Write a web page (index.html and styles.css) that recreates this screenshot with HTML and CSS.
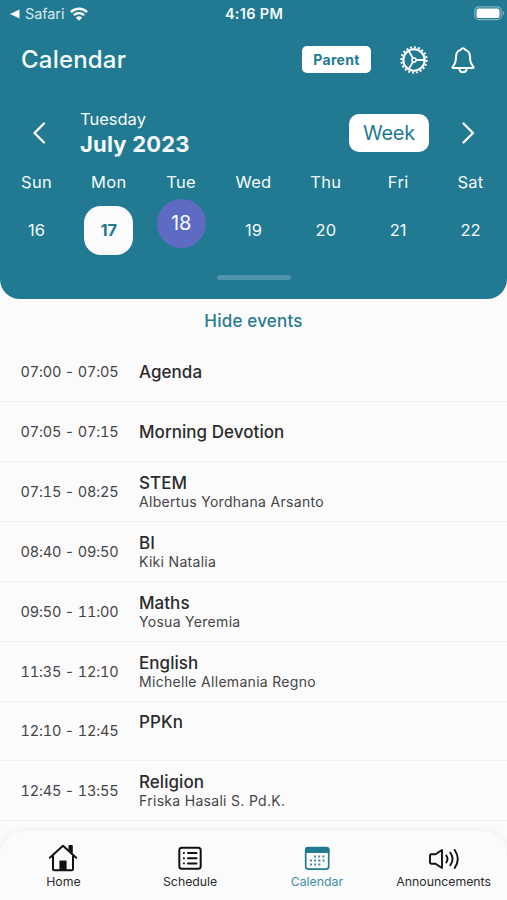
FILE: index.html
```html
<!DOCTYPE html>
<html lang="en">
<head>
<meta charset="utf-8">
<title>Calendar</title>
<link rel="stylesheet" href="styles.css">
</head>
<body>
<div class="app">
  <header class="panel">
    <div class="status">
      <div class="status-left">
        <svg width="10" height="10" viewBox="0 0 10 10"><path d="M0 5 9.5.5v9z" fill="#fff"/></svg>
        <span class="back">Safari</span>
        <svg class="wifi" width="18" height="14" viewBox="0 0 18 14" fill="none" stroke="#fff" stroke-width="2.4"><path d="M.9 5.1a11.6 11.6 0 0 1 16.2 0M3.9 8.2a7.4 7.4 0 0 1 10.2 0"/><path d="M9 13.8 5.900 10.700a4.500 4.500 0 0 1 6.200 0z" fill="#fff" stroke="none"/></svg>
      </div>
      <span class="clock">4:16 PM</span>
      <svg class="battery" width="31" height="15" viewBox="0 0 31 15"><rect x=".8" y=".8" width="26.4" height="12.8" rx="4" fill="none" stroke="#7fb1c0" stroke-width="1.2"/><rect x="2.5" y="2.5" width="23" height="9.4" rx="2.2" fill="#fff"/><path d="M28.700 5v4.400q1.500-.7 1.500-2.200T28.700 5z" fill="#7fb1c0"/></svg>
    </div>
    <div class="titlebar">
      <h1>Calendar</h1>
      <span class="role">Parent</span>
      <svg class="gear" width="28" height="28" viewBox="-14 -14 28 28" fill="none" stroke="#fff"><circle r="10.7" stroke-width="2.1"/><circle r="12.7" stroke-width="2" pathLength="40" stroke-dasharray="1 1"/><circle r="2.1" stroke-width="1.5"/><path d="M2.200 0H10.500M-1.100-1.900-5.400-9.400M-1.100 1.900-5.400 9.400" stroke-width="1.9"/></svg>
      <svg class="bell" width="26" height="28" viewBox="0 0 26 28" fill="none" stroke="#fff" stroke-width="2" stroke-linejoin="round" stroke-linecap="round"><path d="M13 2.200c-1.300 0-2 .7-2.200 1.700C7.300 4.900 6 7.600 6 11c0 5.600-1.200 7.400-3.200 9.600-.7.800-.5 1.500.5 1.500h19.400c1 0 1.200-.7.500-1.500C21.200 18.400 20 16.600 20 11c0-3.400-1.300-6.100-4.800-7.100C15 2.900 14.300 2.200 13 2.200z"/><path d="M9.300 22.500c.3 2.200 1.600 3.700 3.700 3.700s3.400-1.500 3.700-3.700"/></svg>
    </div>
    <div class="monthbar">
      <svg class="prev" width="14" height="24" viewBox="0 0 14 24"><path d="M12 2.500 2.500 12l9.500 9.500"/></svg>
      <div class="month"><span class="weekday">Tuesday</span><strong>July 2023</strong></div>
      <span class="view">Week</span>
      <svg class="next" width="14" height="24" viewBox="0 0 14 24"><path d="m2.500 2.500 9.500 9.500-9.500 9.500"/></svg>
    </div>
    <div class="week names"><span>Sun</span><span>Mon</span><span>Tue</span><span>Wed</span><span>Thu</span><span>Fri</span><span>Sat</span></div>
    <div class="week days"><span>16</span><span class="selected">17</span><span class="today">18</span><span>19</span><span>20</span><span>21</span><span>22</span></div>
    <div class="handle"></div>
  </header>
  <main>
    <div class="toggle">Hide events</div>
    <ul class="events">
      <li><time>07:00 - 07:05</time><div class="event"><b>Agenda</b></div></li>
      <li><time>07:05 - 07:15</time><div class="event"><b>Morning Devotion</b></div></li>
      <li><time>07:15 - 08:25</time><div class="event"><b>STEM</b><small>Albertus Yordhana Arsanto</small></div></li>
      <li><time>08:40 - 09:50</time><div class="event"><b>BI</b><small>Kiki Natalia</small></div></li>
      <li><time>09:50 - 11:00</time><div class="event"><b>Maths</b><small>Yosua Yeremia</small></div></li>
      <li><time>11:35 - 12:10</time><div class="event"><b>English</b><small>Michelle Allemania Regno</small></div></li>
      <li><time>12:10 - 12:45</time><div class="event"><b>PPKn</b><small></small></div></li>
      <li><time>12:45 - 13:55</time><div class="event"><b>Religion</b><small>Friska Hasali S. Pd.K.</small></div></li>
    </ul>
  </main>
  <nav>
    <a><svg width="30" height="28" viewBox="0 0 30 28" fill="none" stroke="#111" stroke-width="2" stroke-linecap="round" stroke-linejoin="round"><path d="M1.800 13.700 15 1.800l13.200 11.900M5 12v12.700q0 1.500 1.500 1.500h17q1.500 0 1.500-1.500V12"/><path d="M21.500 5.500V2h2.300v6.200z" fill="#111"/><path d="M12 17.200h6v8.800h-6z" fill="#111" stroke-width="1.200"/></svg><span>Home</span></a>
    <a><svg width="30" height="28" viewBox="0 0 30 28" fill="none" stroke="#111" stroke-width="2" stroke-linecap="round"><rect x="4.300" y="3.700" width="21.400" height="21" rx="2.500"/><path d="M13 9h8.500M13 14.200h8.500M13 19.400h8.500"/><path d="M8.800 9h.2M8.800 14.200h.2M8.800 19.400h.2" stroke-width="1.900"/></svg><span>Schedule</span></a>
    <a class="active"><svg width="30" height="28" viewBox="0 0 30 28"><rect x="3.700" y="3.700" width="23" height="21.400" rx="2.500" fill="none" stroke="#227a92" stroke-width="1.700"/><path d="M3 9V5.500Q3 3 5.500 3h19Q27.500 3 27.500 5.500V9z" fill="#227a92"/><path d="M12 12.500h11M8 16.500h15M8 20.500h11" stroke="#227a92" stroke-width="2" stroke-dasharray="2 2.150" opacity=".85"/></svg><span>Calendar</span></a>
    <a><svg width="32" height="28" viewBox="0 0 32 28" fill="none" stroke="#111" stroke-width="1.900" stroke-linecap="round" stroke-linejoin="round"><path d="M2 11.500q0-1.200 1.200-1.200H7.500L14 6v18L7.500 19.700H3.200Q2 19.700 2 18.500z"/><path d="M18.300 11.500q2.400 3.500 0 7M22.300 8.800q4.500 6.200 0 12.400M26.700 6q6.200 9 0 18"/></svg><span>Announcements</span></a>
  </nav>
</div>
</body>
</html>
```

FILE: styles.css
```css
* { box-sizing: border-box; }
body { margin: 0; background: #fbfbfb; font-family: Inter, "Liberation Sans", sans-serif; color: #2b2b2d; }
.app { width: 507px; height: 900px; display: flex; flex-direction: column; overflow: hidden; }
svg { display: block; flex: none; }
.panel { height: 299px; flex: none; background: #227a92; color: #f5fbfc; border-radius: 0 0 20px 20px; }

.status { height: 27px; display: grid; grid-template-columns: 1fr auto 1fr; align-items: center; padding: 0 8px 0 10px; }
.status-left { display: flex; align-items: center; }
.back { font-size: 14.500px; line-height: 18px; margin-left: 5px; letter-spacing: -.1px; color: #d5eaf0; }
.wifi { margin-left: 6px; }
.clock { font-size: 14.500px; font-weight: 600; letter-spacing: .3px; margin-left: -1px; }
.battery { justify-self: end; margin-right: -6px; }

.titlebar { height: 65px; display: flex; align-items: center; padding: 0 31px 0 21px; }
h1 { margin: 0 auto 0 0; font-size: 24px; font-weight: 500; letter-spacing: .2px; line-height: 30px; }
.role { width: 69px; height: 27px; line-height: 27px; margin-right: 1px; border-radius: 5px; background: #fff; color: #227a92; text-align: center; font-size: 14px; font-weight: 700; letter-spacing: .3px; }
.gear { margin-left: 28px; }
.bell { margin-left: 22px; }

.monthbar { height: 75px; display: flex; align-items: center; padding: 6px 32px 0; }
.prev, .next { fill: none; stroke: #fff; stroke-width: 2.300; stroke-linecap: round; stroke-linejoin: round; }
.month { margin: -1px auto 0 34px; display: flex; flex-direction: column; }
.weekday { font-size: 16.500px; line-height: 23px; }
.month strong { font-size: 22px; line-height: 26px; font-weight: 700; letter-spacing: .2px; }
.view { width: 80px; height: 38px; line-height: 38px; border-radius: 10px; background: #fff; color: #227a92; text-align: center; font-size: 20px; letter-spacing: -.2px; }
.next { margin-left: 32px; }

.week { display: grid; grid-template-columns: repeat(7, 72.330px); justify-content: center; text-align: center; font-size: 16.500px; }
.names { height: 31px; line-height: 31px; letter-spacing: .3px; }
.days { height: 65px; align-items: center; justify-items: center; }
.days span { width: 49px; height: 49px; line-height: 49px; }
.days .selected { border-radius: 17px; background: #fbfbfb; color: #227a92; font-weight: 700; }
.days .today { border-radius: 50%; background: #5f6bc3; font-size: 20px; position: relative; top: -7px; }
.handle { width: 74px; height: 5px; border-radius: 3px; background: #5094ad; margin: 12px auto 0; }

main { flex: 1; min-height: 0; overflow: hidden; }
.toggle { height: 43.500px; line-height: 44px; text-align: center; color: #287a8f; font-size: 17px; font-weight: 500; letter-spacing: .2px; }
.events { list-style: none; margin: 0; padding: 0; }
.events li { height: 59.850px; display: flex; align-items: center; padding-left: 20.500px; border-bottom: 1px solid #f0f0f0; }
time { width: 118.500px; font-size: 14.500px; letter-spacing: -.18px; font-variant-numeric: tabular-nums; color: #454547; }
.event { display: flex; flex-direction: column; }
.event b { font-size: 17px; font-weight: 500; line-height: 22px; letter-spacing: .05px; }
.event small { font-size: 14px; line-height: 16px; height: 17px; letter-spacing: .3px; color: #454547; }

nav { height: 69px; flex: none; display: grid; grid-template-columns: repeat(4, 1fr); border-radius: 24px 24px 0 0; background: #fbfbfb; box-shadow: 0 0 9px rgba(0, 0, 0, .07); position: relative; }
nav a { display: flex; flex-direction: column; align-items: center; padding-top: 13px; }
nav span { font-size: 12.300px; line-height: 16px; margin-top: 2px; }
.active { color: #3f8ea3; }
```
